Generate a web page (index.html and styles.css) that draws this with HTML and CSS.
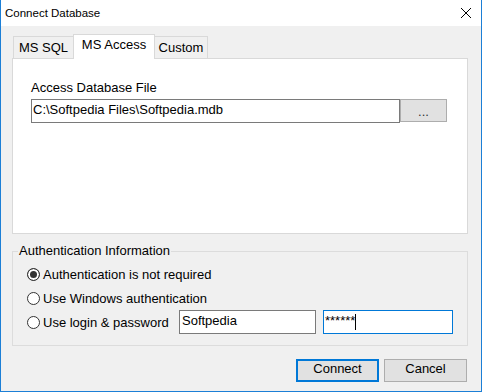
FILE: index.html
```html
<!DOCTYPE html>
<html>
<head>
<meta charset="utf-8">
<title>Connect Database</title>
<link rel="stylesheet" href="styles.css">
</head>
<body>
<div class="window">
  <div class="titlebar">
    <span class="title">Connect Database</span>
    <svg class="close" width="10" height="10" viewBox="0 0 10 10"><path d="M0 0L10 10M10 0L0 10" stroke="#000" stroke-width="1" fill="none"/></svg>
  </div>
  <div class="body">
    <div class="tabs">
      <div class="tab tab-sql">MS SQL</div>
      <div class="tab tab-access active">MS Access</div>
      <div class="tab tab-custom">Custom</div>
    </div>
    <div class="panel">
      <div class="label">Access Database File</div>
      <div class="file-row">
        <div class="textbox path">C:\Softpedia Files\Softpedia.mdb</div>
        <div class="browse">...</div>
      </div>
    </div>
    <fieldset class="group">
      <legend>Authentication Information</legend>
      <div class="options">
        <div class="option"><span class="radio checked"></span><span>Authentication is not required</span></div>
        <div class="option"><span class="radio"></span><span>Use Windows authentication</span></div>
        <div class="option">
          <div class="opt-label"><span class="radio"></span><span>Use login &amp; password</span></div>
          <div class="textbox user">Softpedia</div>
          <div class="textbox pass">******<span class="caret"></span></div>
        </div>
      </div>
    </fieldset>
    <div class="actions">
      <div class="btn default">Connect</div>
      <div class="btn">Cancel</div>
    </div>
  </div>
</div>
</body>
</html>
```

FILE: styles.css
```css
* { box-sizing: border-box; }
html, body { margin: 0; padding: 0; }
body {
  font-family: "Liberation Sans", Arial, sans-serif;
  font-size: 13px;
  color: #000;
  background: #f0f0f0;
}
.window {
  width: 482px;
  height: 392px;
  background: #f0f0f0;
  border: 1px solid #1c7fd6;
  border-top: none;
  display: flex;
  flex-direction: column;
}
.titlebar {
  height: 26px;
  background: #fff;
  display: flex;
  align-items: center;
  padding-left: 4px;
  padding-right: 10px;
  flex-shrink: 0;
}
.title {
  font-size: 11.5px;
  line-height: 14px;
}
.close {
  margin-left: auto;
  display: block;
}
.body {
  padding: 0 13px 0 11px;
  display: flex;
  flex-direction: column;
}
.tabs {
  margin-top: 8px;
  height: 24px;
  display: flex;
  align-items: flex-end;
  padding-left: 1px;
}
.tab {
  height: 22px;
  border: 1px solid #d9d9d9;
  border-bottom: none;
  background: #f0f0f0;
  line-height: 15px;
  padding-top: 3px;
  text-align: center;
  white-space: nowrap;
}
.tab-sql { width: 60px; border-right: none; }
.tab-access { width: 82px; }
.tab-custom { width: 53px; border-left: none; }
.tab.active {
  height: 25px;
  margin-bottom: -1px;
  padding-top: 2px;
  background: #fff;
  position: relative;
  z-index: 1;
}
.panel {
  height: 176px;
  background: #fff;
  border: 1px solid #d9d9d9;
  padding: 21px 18px 0;
}
.label {
  line-height: 15px;
  height: 15px;
}
.file-row {
  margin-top: 4px;
  display: flex;
  align-items: flex-start;
}
.textbox {
  height: 24px;
  background: #fff;
  border: 1px solid #7a7a7a;
  line-height: 15px;
  padding: 2px 2px 0;
  white-space: nowrap;
  overflow: hidden;
}
.path { width: 369px; padding-left: 1px; }
.browse {
  width: 47px;
  height: 23px;
  background: #e1e1e1;
  border: 1px solid #adadad;
  text-align: center;
  line-height: 15px;
  padding-top: 4px;
  color: #333;
}
.group {
  margin: 10px 0 0;
  padding: 0 0 11px;
  border: 1px solid #dcdcdc;
  min-width: 0;
}
.group legend {
  margin-left: 5px;
  padding: 0 1px;
  line-height: 14px;
  font-size: 13px;
}
.options {
  padding-top: 4px;
}
.option {
  height: 24px;
  display: flex;
  align-items: center;
  padding-left: 14px;
  white-space: nowrap;
}
.opt-label {
  width: 152px;
  flex-shrink: 0;
  display: flex;
  align-items: center;
}
.radio {
  width: 13px;
  height: 13px;
  border: 1px solid #333;
  border-radius: 50%;
  background: #fff;
  margin-right: 3px;
  flex-shrink: 0;
}
.radio.checked {
  background: #333;
  box-shadow: inset 0 0 0 2px #fff;
}
.user { width: 137px; }
.pass {
  width: 130px;
  margin-left: 7px;
  border-color: #0078d7;
  padding-left: 1px;
}
.caret {
  display: inline-block;
  width: 1px;
  height: 16px;
  background: #000;
  vertical-align: top;
  margin-top: 1px;
}
.actions {
  margin-top: 13px;
  margin-right: 1px;
  display: flex;
  justify-content: flex-end;
  gap: 5px;
}
.btn {
  width: 83px;
  height: 23px;
  background: #e1e1e1;
  border: 1px solid #adadad;
  text-align: center;
  line-height: 15px;
  padding-top: 1px;
}
.btn.default {
  border: 2px solid #0078d7;
  padding-top: 0;
}
```
